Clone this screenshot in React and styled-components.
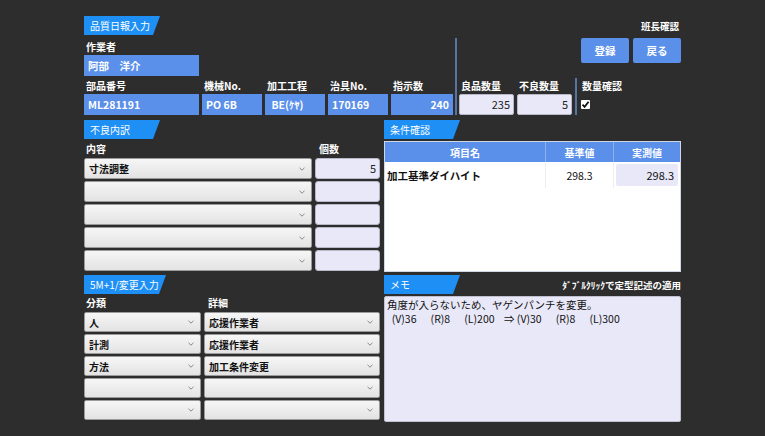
import React from "react";
import styled, { createGlobalStyle } from "styled-components";

const GlobalStyle = createGlobalStyle`
  html, body {
    margin: 0;
    padding: 0;
    background: #2d2d2d;
  }
  body {
    font-family: "Noto Sans CJK JP", "Noto Sans", sans-serif;
    width: 765px;
    height: 436px;
    overflow: hidden;
  }
`;

const defects = ["寸法調整", "", "", "", ""];
const defectCounts = ["5", "", "", "", ""];
const changes = [
  ["人", "応援作業者"],
  ["計測", "応援作業者"],
  ["方法", "加工条件変更"],
  ["", ""],
  ["", ""],
];

const memoText =
  "角度が入らないため、ヤゲンパンチを変更。\n  (V)36      (R)8      (L)200    ⇒ (V)30      (R)8      (L)300";

function Chevron() {
  return (
    <svg width="6" height="4" viewBox="0 0 6 4">
      <path d="M0.5 0.8 L3 3.2 L5.5 0.8" fill="none" stroke="#888" strokeWidth="1" />
    </svg>
  );
}

function Select({ value, width }) {
  return (
    <SelectBox $w={width}>
      <span>{value}</span>
      <Chevron />
    </SelectBox>
  );
}

export default function App() {
  return (
    <>
      <GlobalStyle />
      <Page>
        <TopArea>
          <TopLeft>
            <Tab $w={76}>品質日報入力</Tab>
            <Label $mt={4}>作業者</Label>
            <BlueInput $w={115}>阿部　洋介</BlueInput>
            <FieldRow>
              <Field>
                <Label>部品番号</Label>
                <BlueInput $w={115}>ML281191</BlueInput>
              </Field>
              <Field>
                <Label>機械No.</Label>
                <BlueInput $w={60}>PO 6B</BlueInput>
              </Field>
              <Field>
                <Label>加工工程</Label>
                <BlueInput $w={60}> BE(ｹﾔ)</BlueInput>
              </Field>
              <Field>
                <Label>治具No.</Label>
                <BlueInput $w={60}>170169</BlueInput>
              </Field>
              <Field>
                <Label>指示数</Label>
                <BlueInput $w={62} $right>240</BlueInput>
              </Field>
            </FieldRow>
          </TopLeft>
          <Divider $mt={22} $mx={2} />
          <TopRight>
            <Approval>
              <ApprovalText>班長確認</ApprovalText>
              <Buttons>
                <Button>登録</Button>
                <Button>戻る</Button>
              </Buttons>
            </Approval>
            <QtyRow>
              <Field>
                <Label>良品数量</Label>
                <LavInput $w={55}>235</LavInput>
              </Field>
              <Field>
                <Label>不良数量</Label>
                <LavInput $w={55}>5</LavInput>
              </Field>
              <Divider $mt={0} $mx={0} />
              <Field>
                <Label>数量確認</Label>
                <CheckWrap>
                  <CheckBox>
                    <svg width="9" height="9" viewBox="0 0 9 9">
                      <path d="M1.5 4.6 L3.6 6.8 L7.6 1.8" fill="none" stroke="#111" strokeWidth="1.8" />
                    </svg>
                  </CheckBox>
                </CheckWrap>
              </Field>
            </QtyRow>
          </TopRight>
        </TopArea>

        <Columns $mt={5}>
          <Column>
            <Tab $w={76}>不良内訳</Tab>
            <LabelRow $mt={2}>
              <Label style={{ width: 231 }}>内容</Label>
              <Label>個数</Label>
            </LabelRow>
            <Rows $h={21}>
              {defects.map((d, i) => (
                <RowPair key={i}>
                  <Select value={d} width={228} />
                  <CountInput>{defectCounts[i]}</CountInput>
                </RowPair>
              ))}
            </Rows>
          </Column>
          <Column>
            <Tab $w={76}>条件確認</Tab>
            <TablePanel>
              <Table>
                <thead>
                  <tr>
                    <Th $w={160}>項目名</Th>
                    <Th $w={67}>基準値</Th>
                    <Th>実測値</Th>
                  </tr>
                </thead>
                <tbody>
                  <tr>
                    <Td $bold>加工基準ダイハイト</Td>
                    <Td $center>298.3</Td>
                    <Td>
                      <Measured>298.3</Measured>
                    </Td>
                  </tr>
                </tbody>
              </Table>
            </TablePanel>
          </Column>
        </Columns>

        <Columns $mt={3}>
          <Column>
            <Tab $w={82}>5M+1/変更入力</Tab>
            <LabelRow $mt={1}>
              <Label style={{ width: 120 }}>分類</Label>
              <Label>詳細</Label>
            </LabelRow>
            <Rows $h={20}>
              {changes.map(([a, b], i) => (
                <RowPair key={i}>
                  <Select value={a} width={117} />
                  <Select value={b} width={176} />
                </RowPair>
              ))}
            </Rows>
          </Column>
          <Column>
            <TabBar>
              <Tab $w={76}>メモ</Tab>
              <Hint>ﾀﾞﾌﾞﾙｸﾘｯｸで定型記述の適用</Hint>
            </TabBar>
            <Memo>{memoText}</Memo>
          </Column>
        </Columns>
      </Page>
    </>
  );
}

const Page = styled.div`
  width: 597px;
  padding: 16px 0 0 84px;
  display: flex;
  flex-direction: column;
`;

const TopArea = styled.div`
  display: flex;
  align-items: stretch;
`;

const TopLeft = styled.div`
  width: 369px;
  display: flex;
  flex-direction: column;
`;

const TopRight = styled.div`
  flex: 1;
  display: flex;
  flex-direction: column;
  justify-content: space-between;
`;

const Divider = styled.div`
  width: 2px;
  margin: ${(p) => p.$mt}px ${(p) => p.$mx}px 0 ${(p) => p.$mx}px;
  background: #5874a4;
  align-self: stretch;
`;

const Tab = styled.div`
  width: ${(p) => p.$w}px;
  height: 19px;
  background: #1e8ff5;
  color: #fff;
  font-size: 10px;
  line-height: 19px;
  padding-left: 6px;
  box-sizing: border-box;
  clip-path: polygon(0 0, 100% 0, calc(100% - 7px) 100%, 0 100%);
`;

const TabBar = styled.div`
  display: flex;
  justify-content: space-between;
  align-items: center;
`;

const Hint = styled.div`
  color: #fff;
  font-size: 9.5px;
  font-weight: bold;
  margin-top: 1px;
`;

const Label = styled.div`
  color: #fff;
  font-size: 10px;
  font-weight: bold;
  height: 16px;
  line-height: 16px;
  margin-top: ${(p) => p.$mt || 0}px;
  padding-left: 2px;
`;

const LabelRow = styled.div`
  display: flex;
  margin-top: ${(p) => p.$mt}px;
  margin-bottom: 1px;
`;

const BlueInput = styled.div`
  width: ${(p) => p.$w}px;
  height: 21px;
  box-sizing: border-box;
  background: #5a8fea;
  color: #fff;
  font-size: 10.5px;
  font-weight: bold;
  line-height: 21px;
  padding: 0 4px;
  text-align: ${(p) => (p.$right ? "right" : "left")};
  white-space: pre;
`;

const LavInput = styled.div`
  width: ${(p) => p.$w}px;
  height: 21px;
  box-sizing: border-box;
  background: #e8e8f8;
  border: 1px solid #b8b8c8;
  border-radius: 2px;
  color: #222;
  font-size: 11px;
  line-height: 19px;
  padding: 0 3px;
  text-align: right;
`;

const FieldRow = styled.div`
  display: flex;
  gap: 3px;
  margin-top: 2px;
`;

const Field = styled.div`
  display: flex;
  flex-direction: column;
`;

const Approval = styled.div`
  display: flex;
  flex-direction: column;
  align-items: flex-end;
  margin-top: 3px;
`;

const ApprovalText = styled.div`
  color: #fff;
  font-size: 9.5px;
  font-weight: bold;
  padding-right: 2px;
`;

const Buttons = styled.div`
  display: flex;
  gap: 4px;
  margin-top: 5px;
`;

const Button = styled.button`
  width: 48px;
  height: 25px;
  border: none;
  border-radius: 2px;
  background: #5a8fea;
  color: #fff;
  font-family: inherit;
  font-size: 10.5px;
  font-weight: bold;
  padding: 0;
`;

const QtyRow = styled.div`
  display: flex;
  gap: 3px;
  align-items: stretch;
  margin-top: 12px;
`;

const CheckWrap = styled.div`
  height: 21px;
  display: flex;
  align-items: center;
`;

const CheckBox = styled.div`
  width: 9px;
  height: 9px;
  background: #fff;
  border-radius: 1px;
  margin-left: 1px;
  display: flex;
`;

const Columns = styled.div`
  display: flex;
  gap: 4px;
  margin-top: ${(p) => p.$mt}px;
`;

const Column = styled.div`
  width: 297px;
  display: flex;
  flex-direction: column;
  &:first-child {
    width: 296px;
  }
`;

const Rows = styled.div`
  display: flex;
  flex-direction: column;
  gap: 2px;
  & > div {
    height: ${(p) => p.$h}px;
  }
`;

const RowPair = styled.div`
  display: flex;
  gap: 3px;
`;

const SelectBox = styled.div`
  width: ${(p) => p.$w}px;
  box-sizing: border-box;
  background: linear-gradient(#f6f6f6, #e3e3e3);
  border: 1px solid #9a9a9a;
  border-radius: 2px;
  display: flex;
  align-items: center;
  justify-content: space-between;
  padding: 0 6px 0 4px;
  color: #111;
  font-size: 10px;
  font-weight: bold;
`;

const CountInput = styled.div`
  flex: 1;
  box-sizing: border-box;
  background: #e8e8f8;
  border: 1px solid #b8b8c8;
  border-radius: 3px;
  color: #222;
  font-size: 11px;
  line-height: 19px;
  text-align: right;
  padding: 0 3px;
`;

const TablePanel = styled.div`
  margin-top: 2px;
  height: 131px;
  background: #fff;
  border: 1px solid #cfd6e4;
  box-sizing: border-box;
`;

const Table = styled.table`
  width: 100%;
  border-collapse: collapse;
`;

const Th = styled.th`
  width: ${(p) => (p.$w ? `${p.$w}px` : "auto")};
  height: 20px;
  background: #5a8fea;
  color: #fff;
  font-size: 10px;
  font-weight: bold;
  padding: 0;
  border-left: 1px solid #8fb0ee;
  &:first-child {
    border-left: none;
  }
`;

const Td = styled.td`
  height: 24px;
  padding: 1px 2px;
  font-size: 10.5px;
  font-weight: ${(p) => (p.$bold ? "bold" : "normal")};
  text-align: ${(p) => (p.$center ? "center" : "left")};
  color: #111;
  border-left: 1px solid #eee;
  &:first-child {
    border-left: none;
  }
`;

const Measured = styled.div`
  height: 22px;
  background: #e8e8f8;
  border-radius: 2px;
  text-align: right;
  font-size: 11px;
  line-height: 22px;
  padding-right: 4px;
`;

const Memo = styled.div`
  margin-top: 2px;
  height: 126px;
  box-sizing: border-box;
  background: #e8e8f8;
  border: 1px solid #c0c0d0;
  border-radius: 2px;
  padding: 1px 2px;
  color: #111;
  font-size: 10.5px;
  line-height: 14px;
  white-space: pre;
`;
